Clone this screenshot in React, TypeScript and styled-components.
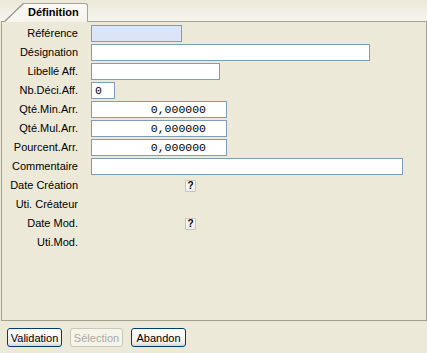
import { Fragment } from "react";
import { styled, createGlobalStyle } from "styled-components";

const GlobalStyle = createGlobalStyle`
  html, body {
    margin: 0;
    padding: 0;
    background: #ece9d8;
  }
  body {
    font-family: "Liberation Sans", Arial, sans-serif;
    font-size: 11px;
    color: #000;
  }
`;

const Window = styled.div`
  width: 427px;
  height: 353px;
  display: flex;
  flex-direction: column;
  background: #ece9d8;
  overflow: hidden;
`;

const TabStrip = styled.div`
  height: 21px;
  display: flex;
  align-items: flex-end;
  padding-left: 24px;
  background: linear-gradient(#ebe8d9, #f6f4ee);
`;

const Tab = styled.div`
  position: relative;
  z-index: 1;
  box-sizing: border-box;
  height: 19px;
  width: 64px;
  margin-bottom: -1px;
  padding-left: 4px;
  border-top: 1px solid #a5a292;
  border-right: 1px solid #a5a292;
  border-top-right-radius: 3px;
  background: linear-gradient(#fbfaf6, #f4f2ea);
  font-size: 11px;
  font-weight: bold;
  line-height: 16px;

  &::before {
    content: "";
    position: absolute;
    left: -20px;
    top: -1px;
    width: 20px;
    height: 19px;
    background: linear-gradient(
      to bottom right,
      transparent calc(50% - 1px),
      #a5a292 calc(50% - 0.5px),
      #a5a292 calc(50% + 0.5px),
      #f7f5ef calc(50% + 1px)
    );
  }
`;

const Panel = styled.div`
  box-sizing: border-box;
  margin-left: 1px;
  width: 426px;
  height: 300px;
  border: 1px solid #a5a292;
  padding: 3px 0 0 0;
`;

const Form = styled.div`
  display: grid;
  grid-template-columns: 76px 1fr;
  grid-auto-rows: 17px;
  column-gap: 13px;
  row-gap: 2px;
`;

const Label = styled.div`
  text-align: right;
  line-height: 17px;
  white-space: nowrap;
`;

const Cell = styled.div`
  display: flex;
  align-items: center;
`;

const Field = styled.input<{ $w: number; $num?: boolean; $ro?: boolean }>`
  box-sizing: border-box;
  width: ${(p) => p.$w}px;
  height: 17px;
  margin: 0;
  border: 1px solid #7f9db9;
  background: ${(p) => (p.$ro ? "#dce4fa" : "#fff")};
  padding: ${(p) => (p.$num ? "0 20px 0 3px" : "0 3px")};
  font-family: "Liberation Mono", "Courier New", monospace;
  font-size: 11.5px;
  text-align: ${(p) => (p.$num ? "right" : "left")};
  color: #000;
  outline: none;
`;

const HelpButton = styled.span`
  box-sizing: border-box;
  margin-left: 94px;
  width: 11px;
  height: 12px;
  border: 1px solid #c9c6b8;
  border-radius: 1px;
  background: linear-gradient(#fdfdfb, #efeee8);
  font-size: 10px;
  font-weight: bold;
  line-height: 10px;
  text-align: center;
`;

const ButtonBar = styled.div`
  display: flex;
  gap: 8px;
  padding: 7px 0 0 7px;
`;

const Button = styled.button<{ $w: number }>`
  box-sizing: border-box;
  width: ${(p) => p.$w}px;
  height: 19px;
  padding: 0;
  border: 1px solid #003c74;
  border-radius: 3px;
  background: linear-gradient(#ffffff, #f0efea 80%, #d8d6ca);
  font-family: "Liberation Sans", Arial, sans-serif;
  font-size: 11px;
  color: #000;

  &:disabled {
    border-color: #c9c7ba;
    background: #f5f4ea;
    color: #aca899;
  }
`;

type Row =
  | { label: string; kind: "field"; w: number; value?: string; num?: boolean; ro?: boolean }
  | { label: string; kind: "help" }
  | { label: string; kind: "none" };

const rows: Row[] = [
  { label: "Référence", kind: "field", w: 91, ro: true },
  { label: "Désignation", kind: "field", w: 279 },
  { label: "Libellé Aff.", kind: "field", w: 129 },
  { label: "Nb.Déci.Aff.", kind: "field", w: 24, value: "0" },
  { label: "Qté.Min.Arr.", kind: "field", w: 136, value: "0,000000", num: true },
  { label: "Qté.Mul.Arr.", kind: "field", w: 136, value: "0,000000", num: true },
  { label: "Pourcent.Arr.", kind: "field", w: 136, value: "0,000000", num: true },
  { label: "Commentaire", kind: "field", w: 312 },
  { label: "Date Création", kind: "help" },
  { label: "Uti. Créateur", kind: "none" },
  { label: "Date Mod.", kind: "help" },
  { label: "Uti.Mod.", kind: "none" },
];

export default function App() {
  return (
    <Window>
      <GlobalStyle />
      <TabStrip>
        <Tab>Définition</Tab>
      </TabStrip>
      <Panel>
        <Form>
          {rows.map((r) => (
            <Fragment key={r.label}>
              <Label>{r.label}</Label>
              <Cell>
                {r.kind === "field" && (
                  <Field $w={r.w} $num={r.num} $ro={r.ro} value={r.value ?? ""} readOnly />
                )}
                {r.kind === "help" && <HelpButton>?</HelpButton>}
              </Cell>
            </Fragment>
          ))}
        </Form>
      </Panel>
      <ButtonBar>
        <Button $w={55}>Validation</Button>
        <Button $w={53} disabled>
          Sélection
        </Button>
        <Button $w={55}>Abandon</Button>
      </ButtonBar>
    </Window>
  );
}
